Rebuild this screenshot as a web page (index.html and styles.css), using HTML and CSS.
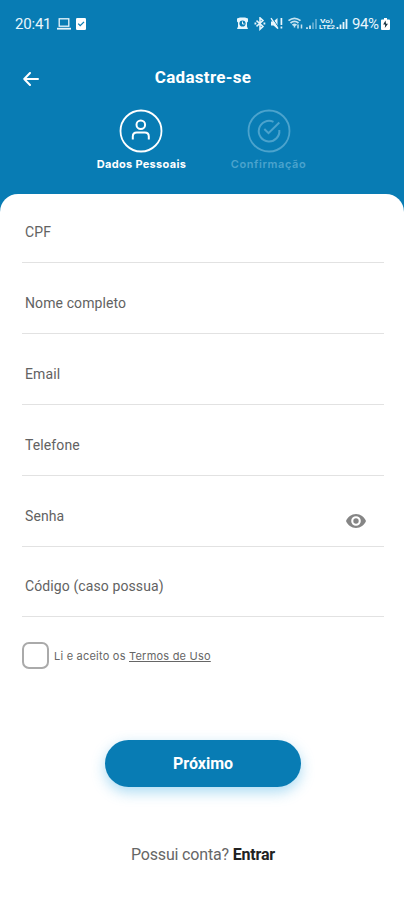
FILE: index.html
```html
<!DOCTYPE html>
<html lang="pt-BR">
<head>
<meta charset="utf-8">
<title>Cadastre-se</title>
<link rel="stylesheet" href="styles.css">
</head>
<body>
<header class="header">
  <div class="status">
    <span class="clock">20:41</span>
    <svg class="laptop" width="14" height="12" viewBox="0 0 14 12" fill="none" stroke="currentColor"><rect x="2.2" y=".8" width="9.6" height="7.4" stroke-width="1.3"/><path d="M0 10.7h14" stroke-width="1.8"/></svg>
    <svg class="task" width="10" height="12" viewBox="0 0 10 12"><rect width="10" height="12" rx="1.2" fill="#fff"/><path d="M2.2 5.6l2 2L8 3.9" fill="none" stroke="#087cb4" stroke-width="1.3"/></svg>
    <svg class="tray" width="112" height="14" viewBox="0 0 112 14" fill="none" stroke="currentColor">
      <path d="M0 1.500L3 .5h5l3 1v3l-1 1v4l1 2.500H8.500h-6H0l1-2.500v-4l-1-1z" fill="currentColor" stroke="none"/>
      <circle cx="5.500" cy="6.500" r="3.100" fill="#087cb4" stroke="none"/>
      <path d="M5.500 4.500v2.500h2" stroke-width="1"/>
      <path d="M19.500 3.600l6.500 5.800-3 2.800V.8l3 2.800-6.500 5.800" stroke-width="1.500"/>
      <path d="M17.500 6.500h1.800M26.500 6.500h1.800" stroke-width="2"/>
      <path d="M34 4.500h2.500L40.500 1v11L36.500 8.500H34z" fill="currentColor" stroke="none"/>
      <path d="M34.500 0l7.500 11" stroke="#087cb4" stroke-width="1"/>
      <path d="M34 1.200l7 10.500" stroke-width="1.300"/>
      <path d="M44.400 1v7M44.400 9.500v2" stroke-width="1.700"/>
      <g opacity=".85"><path d="M51.500 3.600q6-4.600 12 0M53.500 6q4-3.200 8 0M55.500 8.300q2-1.600 4 0" stroke-width="1.800"/><path d="M57.500 10.500V8M61 7.500v4M64.500 11.500v-4" stroke-width="1.500"/></g>
      <path d="M70 12v-1.800M73 12V8.500" stroke-width="1.600"/>
      <path d="M76 12V5.500M79 12V2" stroke-width="1.600" opacity=".45"/>
      <g fill="currentColor" stroke="none" class="carrier"><text x="83" y="5.700" textLength="13" lengthAdjust="spacingAndGlyphs">Vo)</text><text x="82" y="12.200" textLength="16" lengthAdjust="spacingAndGlyphs">LTE2</text></g>
      <path d="M100.500 12v-2M103.500 12V7.500M106.500 12V5M109.500 12V2" stroke-width="1.800"/>
    </svg>
    <span class="percent">94%</span>
    <svg class="battery" width="9" height="12" viewBox="0 0 9 12"><path d="M1 1.500h2V0h3v1.500h2q1 0 1 1V11q0 1-1 1H1q-1 0-1-1V2.500q0-1 1-1z" fill="#fff"/><path d="M4.500 2.600L2.200 6.500h2L3.800 10 7 5.800H5z" fill="#17313f"/></svg>
  </div>
  <div class="titlebar">
    <svg class="back" width="16" height="14" viewBox="0 0 16 14" fill="none" stroke="currentColor" stroke-width="2" stroke-linecap="round" stroke-linejoin="round"><path d="M15 7H1.200M7 1L1.200 7 7 13"/></svg>
    <h1 class="title">Cadastre-se</h1>
  </div>
  <nav class="steps">
    <div class="step">
      <svg width="44" height="44" viewBox="0 0 44 44" fill="none" stroke="currentColor" stroke-width="2"><circle cx="22" cy="22" r="20.500" stroke-width="1.800"/><circle cx="21.800" cy="15.800" r="4.300"/><path d="M13.800 30.500v-3q0-4 4-4h8q4 0 4 4v3"/></svg>
      <span class="label">Dados Pessoais</span>
    </div>
    <div class="step pending">
      <svg width="44" height="44" viewBox="0 0 44 44" fill="none" stroke="currentColor" stroke-width="2"><circle cx="22" cy="22" r="20.500" stroke-width="1.800"/><path d="M26.500 12.900A10.300 10.300 0 1 0 32.300 21"/><path d="M17.300 20l4.200 4.200L32.300 13.500"/></svg>
      <span class="label">Confirmação</span>
    </div>
  </nav>
</header>
<main class="sheet">
  <div class="field"><span>CPF</span></div>
  <div class="field"><span>Nome completo</span></div>
  <div class="field"><span>Email</span></div>
  <div class="field"><span>Telefone</span></div>
  <div class="field"><span>Senha</span>
    <svg class="eye" width="20" height="14" viewBox="0 0 20 14"><path fill="#858585" fill-rule="evenodd" d="M10 0C5.500 0 1.600 2.900 0 7c1.600 4.100 5.500 7 10 7s8.400-2.900 10-7c-1.600-4.100-5.500-7-10-7zm0 11.800a4.800 4.800 0 1 1 0-9.600 4.800 4.800 0 0 1 0 9.600z"/><circle cx="10" cy="7" r="2.700" fill="#858585"/></svg>
  </div>
  <div class="field"><span>Código (caso possua)</span></div>
  <div class="terms"><span class="box"></span><span class="accept">Li e aceito os <u>Termos de Uso</u></span></div>
  <button class="next">Próximo</button>
  <p class="login">Possui conta? <b>Entrar</b></p>
</main>
</body>
</html>
```
FILE: styles.css
```css
* { box-sizing: border-box; }
body {
  margin: 0;
  height: 900px;
  overflow: hidden;
  background: #fff;
  font-family: Roboto, "Liberation Sans", sans-serif;
}
.header {
  height: 214px;
  background: #087cb4;
  color: #fff;
}
.status {
  display: flex;
  align-items: center;
  height: 48px;
  padding: 0 14px 0 15px;
  color: #e9f6fc;
}
.clock { width: 36px; font-size: 15px; letter-spacing: -.2px; }
.laptop { margin-left: 6px; }
.task { margin-left: 5px; }
.tray { margin-left: auto; }
.carrier { font-size: 6px; font-weight: 700; }
.percent { width: 27px; margin-left: 3px; font-size: 15px; letter-spacing: -.4px; }
.battery { margin-left: 2px; }
.titlebar {
  display: grid;
  grid-template-columns: 24px 1fr 24px;
  align-items: center;
  height: 60px;
  padding: 0 21px 0 23px;
}
.back { margin-top: 2px; }
.title {
  margin: 0;
  padding-bottom: 2px;
  text-align: center;
  font-size: 17px;
  line-height: 20px;
  font-weight: 700;
  letter-spacing: .3px;
}
.steps {
  display: flex;
  justify-content: center;
  padding: 1px 0 0 5px;
}
.step {
  display: flex;
  flex-direction: column;
  align-items: center;
  width: 128px;
}
.step.pending { color: #4ba3cd; }
.label {
  margin: 4px 0 0 2px;
  font-family: Inter, Roboto, sans-serif;
  font-size: 11px;
  line-height: 15px;
  font-weight: 700;
  letter-spacing: .3px;
  white-space: nowrap;
}
.pending .label { margin-left: 0; font-weight: 600; letter-spacing: .6px; }
.sheet {
  display: flex;
  flex-direction: column;
  height: 706px;
  margin-top: -20px;
  padding: 0 20px 0 22px;
  border-radius: 18px 18px 0 0;
  background: #fff;
}
.field {
  display: flex;
  align-items: center;
  justify-content: space-between;
  height: 71px;
  padding: 9px 18px 0 3px;
  border-bottom: 1px solid #e2e2e2;
  color: #626262;
  font-size: 14px;
  letter-spacing: .1px;
}
.field:first-child { height: 69px; padding-top: 7px; }
.field:nth-child(6) { height: 70px; }
.eye { margin-top: 10px; }
.terms {
  display: flex;
  align-items: center;
  gap: 5px;
  margin-top: 25px;
}
.box {
  width: 27px;
  height: 27px;
  border: 2px solid #aaa;
  border-radius: 7px;
}
.accept {
  color: #666;
  font-family: Inter, Roboto, sans-serif;
  font-size: 11px;
  letter-spacing: .22px;
  white-space: nowrap;
}
.next {
  align-self: center;
  width: 196px;
  height: 47px;
  margin-top: 71px;
  border: 0;
  border-radius: 24px;
  background: #087cb4;
  box-shadow: 0 5px 14px rgba(45, 165, 225, .4);
  color: #fff;
  font: 700 16px Roboto, sans-serif;
}
.login {
  margin: 58px 0 0;
  text-align: center;
  color: #666;
  font-size: 16px;
  line-height: 20px;
  letter-spacing: -.18px;
}
.login b { color: #222; }
```
